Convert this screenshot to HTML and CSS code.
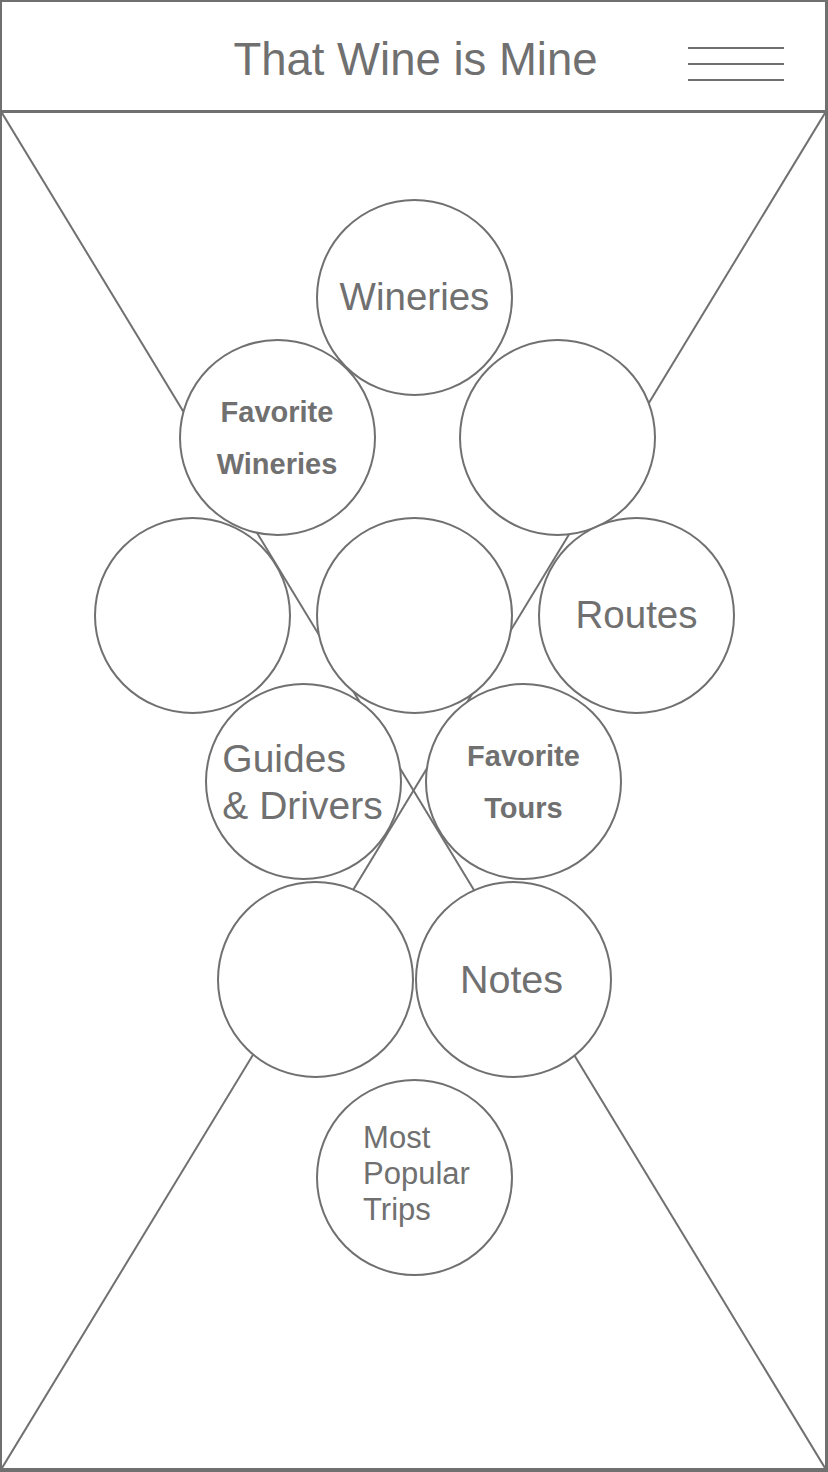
FILE: index.html
```html
<!DOCTYPE html>
<html lang="en">
<head>
<meta charset="utf-8">
<title>That Wine is Mine</title>
<link rel="stylesheet" href="styles.css">
</head>
<body>
<div class="frame">
  <header class="topbar">
    <div class="topbar-spacer"></div>
    <h1 class="title">That Wine is Mine</h1>
    <div class="menu" aria-label="Menu"><span></span><span></span><span></span></div>
  </header>
  <main class="canvas">
    <svg class="placeholder-x" viewBox="0 0 100 100" preserveAspectRatio="none" aria-hidden="true">
      <line x1="0" y1="0" x2="100" y2="100"/>
      <line x1="100" y1="0" x2="0" y2="100"/>
    </svg>
    <div class="bunch">
      <div class="row row-1">
        <div class="grape"><span class="label">Wineries</span></div>
      </div>
      <div class="row row-2">
        <div class="grape"><span class="label label-bold">Favorite<br>Wineries</span></div>
        <div class="grape"></div>
      </div>
      <div class="row row-3">
        <div class="grape"></div>
        <div class="grape"></div>
        <div class="grape"><span class="label">Routes</span></div>
      </div>
      <div class="row row-4">
        <div class="grape"><span class="label label-stack">Guides<br>&amp; Drivers</span></div>
        <div class="grape"><span class="label label-bold">Favorite<br>Tours</span></div>
      </div>
      <div class="row row-5">
        <div class="grape"></div>
        <div class="grape"><span class="label label-notes">Notes</span></div>
      </div>
      <div class="row row-6">
        <div class="grape"><span class="label label-small">Most<br>Popular<br>Trips</span></div>
      </div>
    </div>
  </main>
</div>
</body>
</html>
```

FILE: styles.css
```css
* {
  box-sizing: border-box;
}

html, body {
  margin: 0;
  padding: 0;
  background: #ffffff;
}

body {
  font-family: "Liberation Sans", Arial, Helvetica, sans-serif;
  color: #707070;
}

.frame {
  width: 828px;
  height: 1472px;
  border: 2px solid #707070;
  border-right-width: 3px;
  border-bottom-width: 4px;
  display: flex;
  flex-direction: column;
  overflow: hidden;
}

.topbar {
  height: 111px;
  border-bottom: 3px solid #707070;
  display: grid;
  grid-template-columns: 1fr auto 1fr;
  align-items: center;
  padding: 8px 0 0 4px;
}

.title {
  margin: 0;
  font-size: 45.5px;
  font-weight: 400;
  line-height: 1;
  color: #707070;
  white-space: nowrap;
}

.menu {
  justify-self: end;
  margin: 8px 41px 0 0;
  width: 96px;
  display: flex;
  flex-direction: column;
  gap: 14px;
}

.menu span {
  display: block;
  height: 2px;
  background: #707070;
}

.canvas {
  flex: 1;
  position: relative;
}

.placeholder-x {
  position: absolute;
  inset: 0;
  width: 100%;
  height: 100%;
  z-index: 0;
}

.placeholder-x line {
  stroke: #707070;
  stroke-width: 2;
  vector-effect: non-scaling-stroke;
}

.bunch {
  position: relative;
  z-index: 1;
  display: flex;
  flex-direction: column;
  padding: 86px 0 0 2px;
}

.row {
  display: flex;
  justify-content: center;
}

.row-2 {
  margin-top: -57px;
  gap: 83px;
  padding-left: 5px;
}

.row-3 {
  margin-top: -19px;
  gap: 25px;
}

.row-4 {
  margin-top: -31px;
  gap: 23px;
  padding-right: 2px;
}

.row-5 {
  margin-top: 1px;
  gap: 1px;
}

.row-6 {
  margin-top: 1px;
}

.grape {
  width: 197px;
  height: 197px;
  flex: none;
  border: 2px solid #707070;
  border-radius: 50%;
  background: #ffffff;
  display: flex;
  align-items: center;
  justify-content: center;
}

.label {
  display: block;
  font-size: 38.5px;
  line-height: 1;
  text-align: center;
  white-space: nowrap;
}

.label-notes {
  font-size: 39.5px;
  margin-right: 4px;
}

.label-bold {
  font-size: 29px;
  font-weight: 700;
  line-height: 52px;
}

.label-stack {
  font-size: 39px;
  line-height: 47px;
  text-align: left;
  margin-right: 2px;
}

.label-small {
  font-size: 31px;
  line-height: 36px;
  text-align: left;
  margin: -8px 0 0 4px;
}
```
